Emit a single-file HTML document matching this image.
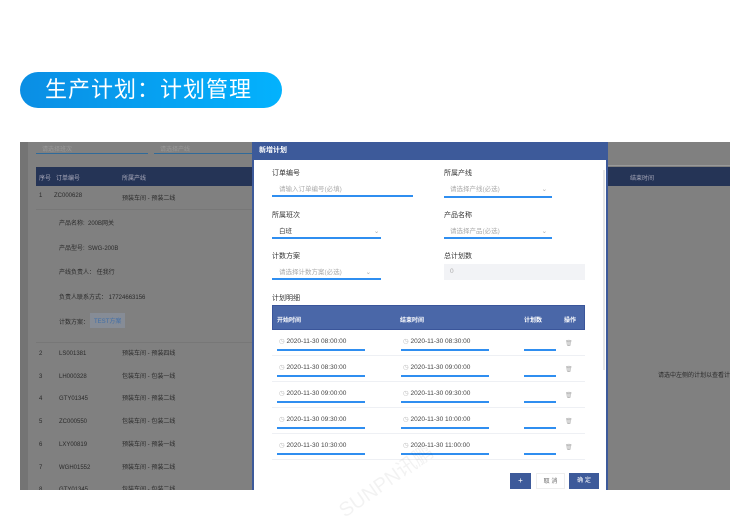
<!DOCTYPE html>
<html><head><meta charset="utf-8"><style>
*{margin:0;padding:0;box-sizing:border-box}
body{width:750px;height:523px;background:#fff;position:relative;overflow:hidden;font-family:"Liberation Sans","Noto Sans CJK SC",sans-serif}
.a{position:absolute}
.pill{left:20px;top:72px;width:262px;height:36px;border-radius:18px;background:linear-gradient(90deg,#0a8ee4,#03b2fd);color:#fff;font-size:22px;line-height:36px;padding-left:25px;letter-spacing:1px}
.bg{left:20px;top:142px;width:710px;height:348px;background:#808080;overflow:hidden}
.t{font-size:6px;color:#2a2a2a;white-space:nowrap}
.mod{left:252px;top:142px;width:356px;height:348px;background:#fff;border-left:2px solid #3d5a9a;border-right:2px solid #3d5a9a}
.mh{left:252px;top:142px;width:356px;height:18px;background:#3d5a9a;color:#fff;font-size:7px;font-weight:bold;line-height:18px;padding-left:7px}
.lb{font-size:7px;color:#333}
.ph{font-size:6.5px;color:#aaa}
.ul{height:2px;background:#2f8ef0}
.row{border-bottom:1px solid #eef0f4}
.d{font-size:6.5px;color:#444;white-space:nowrap}
.btn{height:16px;font-size:6px;line-height:16px;text-align:center}
</style></head><body>
<div class="a pill">生产计划：计划管理</div>
<div class="a bg">
  <div class="a" style="left:0;top:0;width:8px;height:348px;background:#747474"></div>
  <div class="a" style="left:16px;top:11px;width:112px;height:1px;background:#2f6a9a"></div>
  <div class="a t" style="left:22px;top:2px;color:#999">请选择班次</div>
  <div class="a" style="left:134px;top:11px;width:100px;height:1px;background:#2f6a9a"></div>
  <div class="a t" style="left:140px;top:2px;color:#999">请选择产线</div>
  <div class="a" style="left:16px;top:25px;width:694px;height:19px;background:#253456"></div>
  <div class="a" style="left:588px;top:23px;width:122px;height:1px;background:#999"></div>
  <div class="a t" style="left:19px;top:31px;color:#aab">序号 &nbsp; 订单编号</div>
  <div class="a t" style="left:102px;top:31px;color:#aab">所属产线</div>
  <div class="a t" style="left:610px;top:31px;color:#aab">结束时间</div>
  <div class="a t" style="left:19px;top:51px">1 &nbsp; &nbsp; &nbsp; ZC000628</div>
  <div class="a t" style="left:102px;top:51px">预装车间 - 预装二线</div>
  <div class="a" style="left:16px;top:67px;width:236px;height:1px;background:#777"></div>
  <div class="a t" style="left:39px;top:76px">产品名称: &nbsp;200B网关</div>
  <div class="a t" style="left:39px;top:101px">产品型号: &nbsp;SWG-200B</div>
  <div class="a t" style="left:39px;top:125px">产线负责人： 任我行</div>
  <div class="a t" style="left:39px;top:150px">负责人联系方式： 17724663156</div>
  <div class="a t" style="left:39px;top:175px">计数方案：</div>
  <div class="a t" style="left:70px;top:171px;background:#868c96;color:#3f6ea8;padding:3px 4px">TEST方案</div>
  <div class="a t" style="left:638px;top:228px">请选中左侧的计划以查看计划</div>
  <div class="a" style="left:16px;top:200px;width:236px;height:1px;background:#777"></div>
  <div class="a t" style="left:19px;top:201px;line-height:22.7px">2<br>3<br>4<br>5<br>6<br>7<br>8</div>
  <div class="a t" style="left:39px;top:201px;line-height:22.7px">LS001381<br>LH000328<br>GTY01345<br>ZC000550<br>LXY00819<br>WGH01552<br>GTY01345</div>
  <div class="a t" style="left:102px;top:201px;line-height:22.7px">预装车间 - 预装四线<br>包装车间 - 包装一线<br>预装车间 - 预装二线<br>包装车间 - 包装二线<br>预装车间 - 预装一线<br>预装车间 - 预装二线<br>包装车间 - 包装二线</div>
</div>
<div class="a mod"></div>
<div class="a mh">新增计划</div>
<div class="a lb" style="left:272px;top:168px">订单编号</div>
<div class="a ph" style="left:279px;top:183px">请输入订单编号(必填)</div>
<div class="a ul" style="left:272px;top:195px;width:141px"></div>
<div class="a lb" style="left:444px;top:168px">所属产线</div>
<div class="a ph" style="left:450px;top:183px">请选择产线(必选) <span style="margin-left:40px">⌄</span></div>
<div class="a ul" style="left:444px;top:196px;width:108px"></div>
<div class="a lb" style="left:272px;top:210px">所属班次</div>
<div class="a ph" style="left:279px;top:225px;color:#444">白班 <span style="margin-left:80px;color:#aaa">⌄</span></div>
<div class="a ul" style="left:272px;top:237px;width:109px"></div>
<div class="a lb" style="left:444px;top:210px">产品名称</div>
<div class="a ph" style="left:450px;top:225px">请选择产品(必选) <span style="margin-left:40px">⌄</span></div>
<div class="a ul" style="left:444px;top:237px;width:108px"></div>
<div class="a lb" style="left:272px;top:251px">计数方案</div>
<div class="a ph" style="left:279px;top:266px">请选择计数方案(必选) <span style="margin-left:22px">⌄</span></div>
<div class="a ul" style="left:272px;top:278px;width:109px"></div>
<div class="a lb" style="left:444px;top:251px">总计划数</div>
<div class="a ph" style="left:444px;top:264px;width:141px;height:16px;background:#f2f3f6;padding:4px 6px;line-height:8px">0</div>
<div class="a lb" style="left:272px;top:293px">计划明细</div>
<div class="a" style="left:272px;top:305px;width:313px;height:25px;background:#4a67a8;border:1px solid #3a559a"></div>
<div class="a t" style="left:277px;top:315px;color:#fff;font-weight:bold">开始时间</div>
<div class="a t" style="left:400px;top:315px;color:#fff;font-weight:bold">结束时间</div>
<div class="a t" style="left:524px;top:315px;color:#fff;font-weight:bold">计划数</div>
<div class="a t" style="left:564px;top:315px;color:#fff;font-weight:bold">操作</div>
<div class="a" style="left:272px;top:330px;width:313px">
<div class="row a" style="top:0;width:313px;height:26px"></div>
<div class="row a" style="top:26px;width:313px;height:26px"></div>
<div class="row a" style="top:52px;width:313px;height:26px"></div>
<div class="row a" style="top:78px;width:313px;height:26px"></div>
<div class="row a" style="top:104px;width:313px;height:26px"></div>
</div>
<div class="a" style="left:279px;top:329px;line-height:26px" >
<div class="d"><span style="color:#bbb">◷</span> 2020-11-30 08:00:00</div>
<div class="d"><span style="color:#bbb">◷</span> 2020-11-30 08:30:00</div>
<div class="d"><span style="color:#bbb">◷</span> 2020-11-30 09:00:00</div>
<div class="d"><span style="color:#bbb">◷</span> 2020-11-30 09:30:00</div>
<div class="d"><span style="color:#bbb">◷</span> 2020-11-30 10:30:00</div>
</div>
<div class="a" style="left:403px;top:329px;line-height:26px">
<div class="d"><span style="color:#bbb">◷</span> 2020-11-30 08:30:00</div>
<div class="d"><span style="color:#bbb">◷</span> 2020-11-30 09:00:00</div>
<div class="d"><span style="color:#bbb">◷</span> 2020-11-30 09:30:00</div>
<div class="d"><span style="color:#bbb">◷</span> 2020-11-30 10:00:00</div>
<div class="d"><span style="color:#bbb">◷</span> 2020-11-30 11:00:00</div>
</div>
<div class="a ul" style="left:277px;top:349px;width:88px"></div><div class="a ul" style="left:401px;top:349px;width:88px"></div><div class="a ul" style="left:524px;top:349px;width:32px"></div>
<div class="a ul" style="left:277px;top:375px;width:88px"></div><div class="a ul" style="left:401px;top:375px;width:88px"></div><div class="a ul" style="left:524px;top:375px;width:32px"></div>
<div class="a ul" style="left:277px;top:401px;width:88px"></div><div class="a ul" style="left:401px;top:401px;width:88px"></div><div class="a ul" style="left:524px;top:401px;width:32px"></div>
<div class="a ul" style="left:277px;top:427px;width:88px"></div><div class="a ul" style="left:401px;top:427px;width:88px"></div><div class="a ul" style="left:524px;top:427px;width:32px"></div>
<div class="a ul" style="left:277px;top:453px;width:88px"></div><div class="a ul" style="left:401px;top:453px;width:88px"></div><div class="a ul" style="left:524px;top:453px;width:32px"></div>
<div class="a" style="left:565px;top:331px;line-height:26px;font-size:6px;color:#aaa">🗑︎<br>🗑︎<br>🗑︎<br>🗑︎<br>🗑︎</div>
<div class="a" style="left:603px;top:170px;width:2px;height:200px;background:#e6e6e6"></div>
<div class="a btn" style="left:510px;top:473px;width:21px;background:#3d5a9a;color:#fff;font-size:8px">+</div>
<div class="a btn" style="left:536px;top:473px;width:29px;background:#fff;border:1px solid #eee;color:#666">取 消</div>
<div class="a btn" style="left:569px;top:473px;width:30px;background:#3d5a9a;color:#fff">确 定</div>
<div class="a" style="left:0;top:490px;width:750px;height:33px;background:#fff"></div>
<div class="a" style="left:330px;top:465px;font-size:20px;color:rgba(0,0,0,0.05);transform:rotate(-35deg);white-space:nowrap">SUNPN讯鹏</div>
</body></html>
